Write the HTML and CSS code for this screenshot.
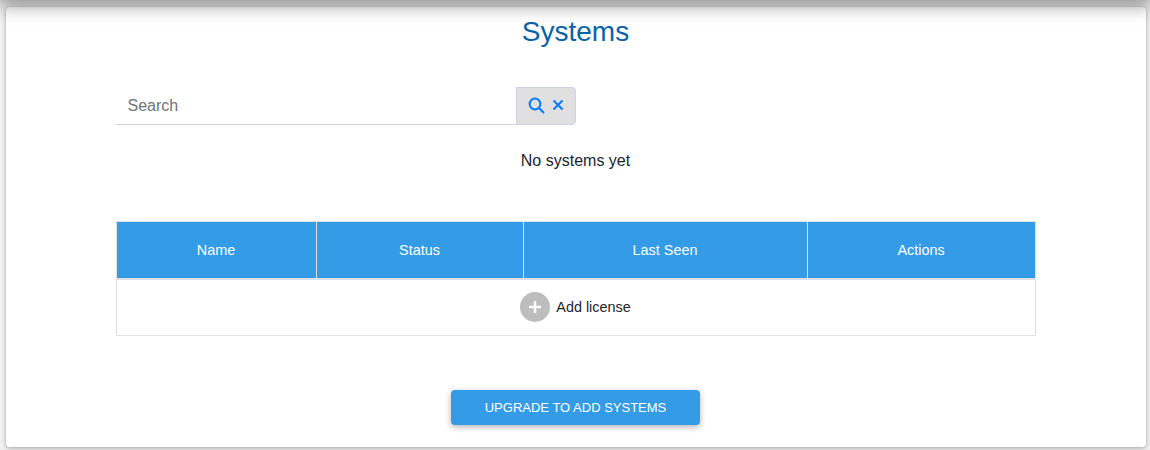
FILE: index.html
```html
<!DOCTYPE html>
<html lang="en">
<head>
<meta charset="utf-8">
<title>Systems</title>
<link rel="stylesheet" href="styles.css">
</head>
<body>
<div class="topbar"></div>
<main class="card">
  <h1 class="title">Systems</h1>
  <div class="search">
    <input class="search-input" type="text" placeholder="Search">
    <div class="search-actions">
      <svg class="icon-search" viewBox="0 0 17 17" width="17" height="17" aria-hidden="true"><circle cx="7" cy="7" r="5.4"/><path d="M11 11l5 5"/></svg>
      <svg class="icon-clear" viewBox="0 0 12 12" width="12" height="12" aria-hidden="true"><path d="M1.5 1.5l9 9M10.5 1.5l-9 9"/></svg>
    </div>
  </div>
  <p class="empty">No systems yet</p>
  <table class="systems">
    <colgroup>
      <col class="col-name"><col class="col-status"><col class="col-seen"><col class="col-actions">
    </colgroup>
    <thead>
      <tr><th>Name</th><th>Status</th><th>Last Seen</th><th>Actions</th></tr>
    </thead>
    <tbody>
      <tr>
        <td colspan="4">
          <div class="add">
            <span class="add-btn"><svg viewBox="0 0 14 14" width="14" height="14" aria-hidden="true"><path d="M7 1v12M1 7h12"/></svg></span>
            <span>Add license</span>
          </div>
        </td>
      </tr>
    </tbody>
  </table>
  <button class="upgrade" type="button">UPGRADE TO ADD SYSTEMS</button>
</main>
</body>
</html>
```
FILE: styles.css
```css
* { box-sizing: border-box; }
html, body { margin: 0; height: 100%; }
body {
  background: #f1f1f1;
  padding: 7px 4px 3px 6px;
  font-family: "Liberation Sans", Arial, sans-serif;
  color: #212529;
  overflow: hidden;
}
.topbar {
  position: absolute;
  top: -10px;
  left: 0;
  right: 0;
  height: 10px;
  z-index: 2;
  box-shadow: 0 0 20px 2px rgba(0, 0, 0, 0.65);
}
.card {
  height: 440px;
  padding-right: 1px;
  background: #fff;
  border-radius: 4px;
  box-shadow: 0 1px 4px rgba(0, 0, 0, 0.35);
  display: flex;
  flex-direction: column;
  align-items: center;
}
.title {
  margin: 9px 0 0;
  font-size: 28px;
  line-height: 32px;
  font-weight: 400;
  color: #0a62a5;
}
.search {
  width: 920px;
  margin-top: 39px;
  display: flex;
  height: 38px;
}
.search-input {
  width: 400px;
  height: 38px;
  border: 0;
  border-bottom: 1px solid #ced4da;
  padding: 0 12px;
  font: 16px "Liberation Sans", Arial, sans-serif;
  outline: 0;
  background: #fff;
}
.search-input::placeholder { color: #6c757d; opacity: 1; }
.search-actions {
  width: 60px;
  height: 38px;
  background: #e0e0e0;
  border: 1px solid #ced4da;
  border-radius: 0 4px 4px 0;
  display: flex;
  align-items: center;
  padding: 0 0 2px 11px;
  gap: 7px;
}
.search-actions svg { fill: none; stroke: #007bff; stroke-width: 2; }
.empty {
  margin: 26px 0 0;
  font-size: 16px;
  line-height: 20px;
}
.systems {
  width: 919px;
  margin-top: 50px;
  border-collapse: collapse;
  table-layout: fixed;
  font-size: 14.4px;
}
.col-name { width: 200px; }
.col-status { width: 207px; }
.col-seen { width: 284px; }
.col-actions { width: 228px; }
.systems th {
  height: 57px;
  background: #349be6;
  color: #fff;
  font-weight: 400;
  border: 1px solid #dee2e6;
  border-bottom-width: 2px;
  padding: 0;
}
.systems td {
  height: 57px;
  border: 1px solid #dee2e6;
  padding: 0;
}
.add {
  display: flex;
  justify-content: center;
  align-items: center;
  gap: 6px;
}
.add-btn {
  width: 30px;
  height: 30px;
  border-radius: 50%;
  background: #bdbdbd;
  display: flex;
  align-items: center;
  justify-content: center;
}
.add-btn svg { fill: none; stroke: #fff; stroke-width: 2.4; }
.upgrade {
  margin-top: 54px;
  width: 249px;
  height: 35px;
  border: 0;
  border-radius: 4px;
  background: #349be6;
  color: #fff;
  font: 13px "Liberation Sans", Arial, sans-serif;
  padding: 0;
  box-shadow: 0 2px 6px rgba(0, 0, 0, 0.3);
}
```
